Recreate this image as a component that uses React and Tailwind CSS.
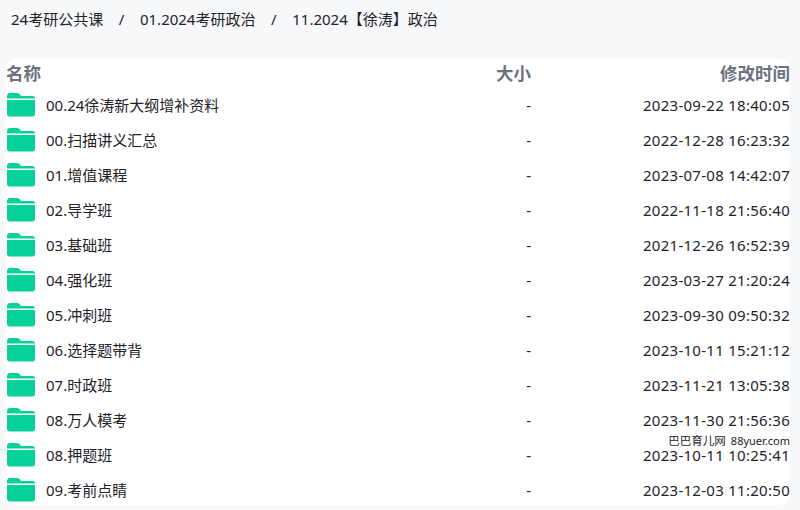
const rows = [
  ["00.24徐涛新大纲增补资料", "2023-09-22 18:40:05"],
  ["00.扫描讲义汇总", "2022-12-28 16:23:32"],
  ["01.增值课程", "2023-07-08 14:42:07"],
  ["02.导学班", "2022-11-18 21:56:40"],
  ["03.基础班", "2021-12-26 16:52:39"],
  ["04.强化班", "2023-03-27 21:20:24"],
  ["05.冲刺班", "2023-09-30 09:50:32"],
  ["06.选择题带背", "2023-10-11 15:21:12"],
  ["07.时政班", "2023-11-21 13:05:38"],
  ["08.万人模考", "2023-11-30 21:56:36"],
  ["08.押题班", "2023-10-11 10:25:41"],
  ["09.考前点睛", "2023-12-03 11:20:50"],
];

function Folder() {
  return (
    <svg width="29" height="24" viewBox="0 0 29 24" className="mb-[2px] shrink-0">
      <path d="M0 3.500C0 1.500 1 0 3 0h6.500c1.500 0 2.500.5 3.500 1.500l1 1.500h11.500c1.500 0 2.500 1 2.500 2.500H0z" fill="#05d198" />
      <path d="M0 7h28v14c0 1.500-1 2.500-2.500 2.500H2.500C1 23.500 0 22.500 0 21z" fill="#05d198" />
    </svg>
  );
}

export default function App() {
  return (
    <div className="relative h-[510px] w-[800px] overflow-hidden bg-[#f6f8fa] text-[15px] text-[#1f2328] font-['Noto_Sans','Noto_Sans_CJK_SC',sans-serif]">
      <div className="flex h-[59px] items-start gap-[15.6px] pl-[11px] pt-[9px] leading-[21px]">
        <span>24考研公共课</span>
        <span>/</span>
        <span>01.2024考研政治</span>
        <span>/</span>
        <span>11.2024【徐涛】政治</span>
      </div>
      <div className="ml-[6px] h-[446px] w-[784px] overflow-hidden rounded-[10px] bg-white">
        <div className="flex h-[29px] items-center text-[17.5px] font-bold text-[#6b7280]">
          <span className="flex-1">名称</span>
          <span className="mr-[189px] w-[35px] text-right">大小</span>
          <span className="text-right">修改时间</span>
        </div>
        {rows.map(([name, date]) => (
          <div key={name} className="flex h-[35px] items-center">
            <div className="ml-px flex w-[494px] items-center gap-[10px]">
              <Folder />
              <span>{name}</span>
            </div>
            <span className="w-[30px] text-right">-</span>
            <span className="flex-1 text-right tracking-[0.28px]">{date}</span>
          </div>
        ))}
      </div>
      <div className="absolute right-[10px] top-[435px] flex items-center gap-[5px] text-[11px] leading-[11px] text-[#222]">
        <span className="text-[11.5px]">巴巴育儿网</span>
        <span>88yuer.com</span>
      </div>
    </div>
  );
}
